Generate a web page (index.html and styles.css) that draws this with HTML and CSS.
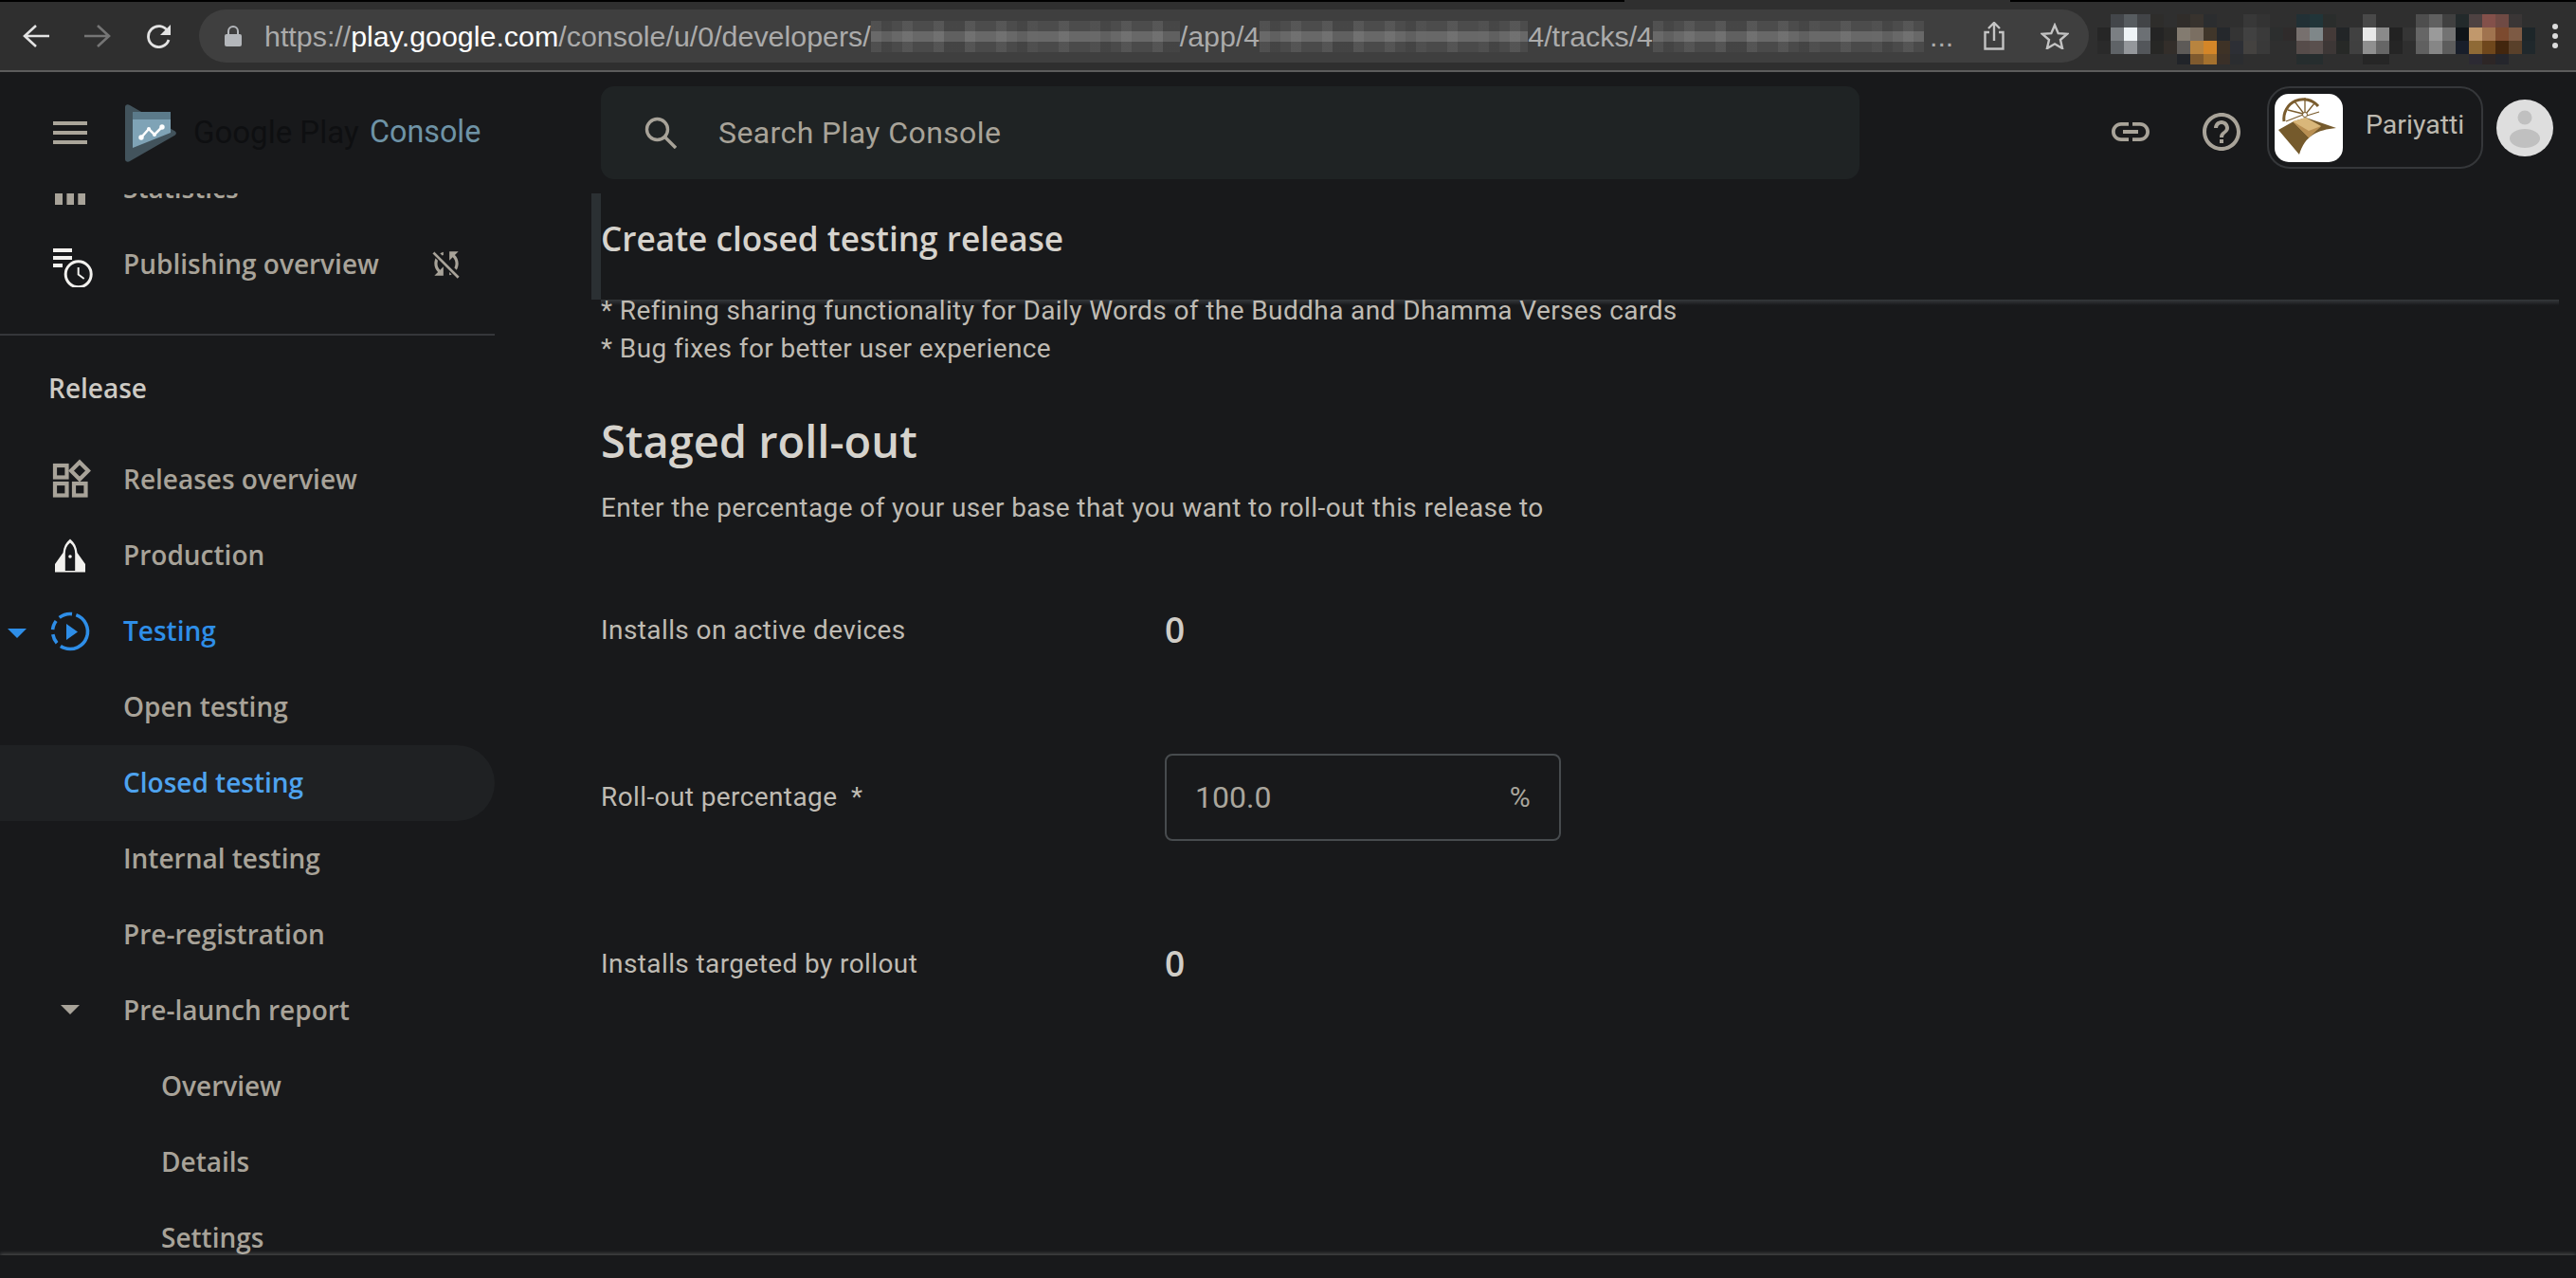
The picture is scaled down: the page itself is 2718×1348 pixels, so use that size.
FILE: index.html
```html
<!DOCTYPE html>
<html>
<head>
	<meta charset="UTF-8">
	<title>Create closed testing release</title>
	<link rel="stylesheet" href="styles.css">
</head>
<body>
<div class="chrome">
	<div class="strip"><i class="strip-left"></i><i class="strip-right"></i></div>
	<div class="toolbar">
		<svg class="nav-icon" viewBox="0 0 28 26"><path d="M14 2L2 13l12 11M2 13h26" fill="none" stroke="#e3e3e3" stroke-width="2.6"/></svg>
		<svg class="nav-icon" viewBox="0 0 28 26"><path d="M14 2l12 11-12 11M26 13H0" fill="none" stroke="#757575" stroke-width="2.6"/></svg>
		<svg class="nav-icon" viewBox="0 0 28 26"><path d="M23 8a11 11 0 1 0 1 9" fill="none" stroke="#e3e3e3" stroke-width="2.8"/><path d="M26 1v11H15z" fill="#e3e3e3"/></svg>
		<div class="pill">
			<svg class="lock" viewBox="0 0 18 22"><path d="M4 10V6a5 5 0 0 1 10 0v4" fill="none" stroke="#b4b7bb" stroke-width="2"/><rect x="0" y="9" width="18" height="13" rx="2" fill="#b4b7bb"/></svg>
			<div class="url">
				<span>https://</span><b>play.google.com</b><span>/console/u/0/developers/</span>
				<i class="blur blur-a"></i><span>/app/4</span>
				<i class="blur blur-b"></i><span>4/tracks/4</span>
				<i class="blur blur-c"></i><span class="dots-text">...</span>
			</div>
			<svg class="share" viewBox="0 0 22 30"><path d="M6 11H1.5v17.5h19V11H16M11 20V2M5 7l6-6 6 6" fill="none" stroke="#c4c4c4" stroke-width="2.4"/></svg>
			<svg class="star" viewBox="0 0 30 28"><path d="M15 2.5l3.7 8.6 9.3.8-7 6.1 2.1 9.1-8.100-4.800-8.100 4.800 2.100-9.100-7-6.100 9.300-.8z" fill="none" stroke="#c4c4c4" stroke-width="2.4"/></svg>
		</div>
		<svg class="ext" viewBox="0 0 467 59" shape-rendering="crispEdges">
			<g transform="translate(0 6)">
			<rect x="14" width="14" height="14" fill="#43464a"/><rect x="28" width="14" height="14" fill="#575c60"/><rect x="42" width="14" height="14" fill="#424447"/><rect x="56" width="14" height="14" fill="#2e2d2b"/><rect x="98" width="14" height="14" fill="#38332e"/><rect x="84" width="14" height="14" fill="#302d2a"/><rect x="112" width="14" height="14" fill="#2b2d2f"/><rect x="154" width="14" height="14" fill="#383838"/><rect x="168" width="14" height="14" fill="#333"/><rect x="210" width="14" height="14" fill="#223035"/><rect x="224" width="14" height="14" fill="#213539"/><rect x="238" width="14" height="14" fill="#2a2d2c"/><rect x="280" width="14" height="14" fill="#494949"/><rect x="336" width="14" height="14" fill="#4e4e4e"/><rect x="350" width="14" height="14" fill="#606060"/><rect x="364" width="14" height="14" fill="#404040"/><rect x="378" width="14" height="14" fill="#232a2b"/><rect x="392" width="14" height="14" fill="#4e4242"/><rect x="406" width="14" height="14" fill="#83504a"/><rect x="420" width="14" height="14" fill="#6f4a44"/><rect x="434" width="14" height="14" fill="#3a3636"/>
			<rect y="14" width="14" height="14" fill="#262626"/><rect x="14" y="14" width="14" height="14" fill="#7b7f83"/><rect x="28" y="14" width="14" height="14" fill="#eef3f6"/><rect x="42" y="14" width="14" height="14" fill="#6c7074"/><rect x="56" y="14" width="14" height="14" fill="#242424"/><rect x="70" y="14" width="14" height="14" fill="#2b2a28"/><rect x="84" y="14" width="14" height="14" fill="#837b70"/><rect x="98" y="14" width="14" height="14" fill="#7b6f62"/><rect x="112" y="14" width="14" height="14" fill="#40362a"/><rect x="126" y="14" width="14" height="14" fill="#25282c"/><rect x="140" y="14" width="14" height="14" fill="#343434"/><rect x="154" y="14" width="14" height="14" fill="#414141"/><rect x="168" y="14" width="14" height="14" fill="#3a3a3a"/><rect x="182" y="14" width="14" height="14" fill="#2c2e2e"/><rect x="196" y="14" width="14" height="14" fill="#2f2b2b"/><rect x="210" y="14" width="14" height="14" fill="#77706e"/><rect x="224" y="14" width="14" height="14" fill="#7f8789"/><rect x="238" y="14" width="14" height="14" fill="#443a38"/><rect x="252" y="14" width="14" height="14" fill="#222527"/><rect x="266" y="14" width="14" height="14" fill="#414141"/><rect x="280" y="14" width="14" height="14" fill="#e8e8e8"/><rect x="294" y="14" width="14" height="14" fill="#8a8a8a"/><rect x="308" y="14" width="14" height="14" fill="#222"/><rect x="322" y="14" width="14" height="14" fill="#353535"/><rect x="336" y="14" width="14" height="14" fill="#666"/><rect x="350" y="14" width="14" height="14" fill="#9a9a9a"/><rect x="364" y="14" width="14" height="14" fill="#737373"/><rect x="378" y="14" width="14" height="14" fill="#0f1418"/><rect x="392" y="14" width="14" height="14" fill="#c1986c"/><rect x="406" y="14" width="14" height="14" fill="#a0734f"/><rect x="420" y="14" width="14" height="14" fill="#7c4a2f"/><rect x="434" y="14" width="14" height="14" fill="#7d5a44"/><rect x="448" y="14" width="14" height="14" fill="#1d2629"/>
			<rect y="28" width="14" height="14" fill="#2a2a2a"/><rect x="14" y="28" width="14" height="14" fill="#5f6367"/><rect x="28" y="28" width="14" height="14" fill="#94979b"/><rect x="42" y="28" width="14" height="14" fill="#53565a"/><rect x="56" y="28" width="14" height="14" fill="#272725"/><rect x="70" y="28" width="14" height="14" fill="#332e2a"/><rect x="84" y="28" width="14" height="14" fill="#5d5a57"/><rect x="98" y="28" width="14" height="14" fill="#b8843f"/><rect x="112" y="28" width="14" height="14" fill="#d48628"/><rect x="126" y="28" width="14" height="14" fill="#3e3226"/><rect x="140" y="28" width="14" height="14" fill="#2d2f35"/><rect x="154" y="28" width="14" height="14" fill="#444240"/><rect x="168" y="28" width="14" height="14" fill="#393939"/><rect x="210" y="28" width="14" height="14" fill="#564c4a"/><rect x="224" y="28" width="14" height="14" fill="#5a504e"/><rect x="238" y="28" width="14" height="14" fill="#3d3736"/><rect x="252" y="28" width="14" height="14" fill="#272927"/><rect x="266" y="28" width="14" height="14" fill="#404040"/><rect x="280" y="28" width="14" height="14" fill="#8f8f8f"/><rect x="294" y="28" width="14" height="14" fill="#666"/><rect x="308" y="28" width="14" height="14" fill="#252525"/><rect x="336" y="28" width="14" height="14" fill="#606060"/><rect x="350" y="28" width="14" height="14" fill="#868686"/><rect x="364" y="28" width="14" height="14" fill="#5c5c5c"/><rect x="378" y="28" width="14" height="14" fill="#181e2a"/><rect x="392" y="28" width="14" height="14" fill="#8f6a36"/><rect x="406" y="28" width="14" height="14" fill="#6f471c"/><rect x="420" y="28" width="14" height="14" fill="#42260e"/><rect x="434" y="28" width="14" height="14" fill="#59402a"/><rect x="448" y="28" width="14" height="14" fill="#20282c"/>
			<rect x="84" y="42" width="14" height="11" fill="#212429"/><rect x="98" y="42" width="14" height="11" fill="#7f5a2e"/><rect x="112" y="42" width="14" height="11" fill="#a4712e"/><rect x="126" y="42" width="14" height="11" fill="#3a3028"/><rect x="140" y="42" width="14" height="11" fill="#2b2d30"/><rect x="210" y="42" width="28" height="11" fill="#262d2e"/><rect x="280" y="42" width="28" height="11" fill="#262626"/><rect x="392" y="42" width="14" height="11" fill="#2c2a33"/><rect x="406" y="42" width="14" height="11" fill="#2d2626"/><rect x="420" y="42" width="14" height="11" fill="#25262c"/>
			</g>
		</svg>
		<div class="menu"><i></i><i></i><i></i></div>
	</div>
</div>

<div class="console">
	<div class="topbar">
		<div class="brand">
			<div class="burger"><i></i><i></i><i></i></div>
			<svg class="play-logo" viewBox="0 0 54 61">
				<path d="M0 3c0-3 3-3.500 5-2l47 27c2.500 1.500 2.500 3.500 0 5L5 60c-2 1.500-5 .5-5-2z" fill="#42535c"/>
				<path d="M8 8h40v22L8 46z" fill="#7fa3b6"/>
				<path d="M8 8h40v8H8z" fill="#5b7a8a"/>
				<path d="M17 35l8-9 6 6 8-8" fill="none" stroke="#fff" stroke-width="2.500"/>
				<circle cx="17" cy="35" r="2.700" fill="#fff"/><circle cx="25" cy="26" r="2" fill="#fff"/><circle cx="31" cy="32" r="2" fill="#fff"/><circle cx="39" cy="24" r="2.700" fill="#fff"/>
			</svg>
			<span class="brand-name">Google Play</span>
			<span class="brand-console">Console</span>
		</div>
		<div class="search">
			<svg class="search-icon" viewBox="0 0 34 34"><circle cx="13.500" cy="13.500" r="11" fill="none" stroke="#a8a399" stroke-width="3.400"/><path d="M21 21l12 12" stroke="#a8a399" stroke-width="3.400"/></svg>
			<span>Search Play Console</span>
		</div>
		<svg class="top-icon" viewBox="0 0 24 24"><path fill="#a8a399" d="M3.900 12c0-1.710 1.390-3.100 3.100-3.100h4V7H7c-2.760 0-5 2.240-5 5s2.240 5 5 5h4v-1.900H7c-1.710 0-3.100-1.390-3.100-3.100zM8 13h8v-2H8v2zm9-6h-4v1.900h4c1.710 0 3.100 1.390 3.100 3.100s-1.390 3.100-3.100 3.100h-4V17h4c2.760 0 5-2.240 5-5s-2.240-5-5-5z"/></svg>
		<svg class="top-icon help" viewBox="0 0 24 24"><path fill="#a8a399" d="M11 18h2v-2h-2v2zm1-16C6.480 2 2 6.480 2 12s4.480 10 10 10 10-4.480 10-10S17.520 2 12 2zm0 18c-4.410 0-8-3.590-8-8s3.590-8 8-8 8 3.590 8 8-3.590 8-8 8zm0-14c-2.210 0-4 1.790-4 4h2c0-1.100.9-2 2-2s2 .9 2 2c0 2-3 1.750-3 5h2c0-2.250 3-2.500 3-5 0-2.210-1.790-4-4-4z"/></svg>
		<div class="account">
			<svg class="app-logo" viewBox="0 0 72 72">
				<rect width="72" height="72" rx="15" fill="#fff"/>
				<path d="M10 29A20.500 20.500 0 0 1 46 13" fill="none" stroke="#7a5c2e" stroke-width="3"/>
				<path d="M31 21L21 8M32 20l0-16M33 21l9-11M34 23l13-4M12 29l18-7M14 17l16 4" stroke="#7a5c2e" stroke-width="1.300"/>
				<circle cx="32" cy="22" r="2.500" fill="#fff" stroke="#7a5c2e"/>
				<path d="M4 38l16-9 13-4 32 11c-20 2-33 8-39 28z" fill="#755a2c"/>
				<path d="M19 29l14-4 16 9-13 12z" fill="#d9b77a"/>
				<path d="M19 29l17 10 13-5-13 12z" fill="#b98f52"/>
			</svg>
			<span>Pariyatti</span>
		</div>
		<svg class="avatar" viewBox="0 0 60 60">
			<circle cx="30" cy="30" r="30" fill="#dedede"/>
			<circle cx="30" cy="19" r="7.500" fill="#c0c0c0"/>
			<ellipse cx="30" cy="41" rx="16" ry="10" fill="#c0c0c0"/>
		</svg>
	</div>

	<div class="panes">
		<nav class="sidebar">
			<ul class="nav-list">
				<li class="nav-row">
					<svg class="nav-glyph" viewBox="0 0 48 48"><path fill="#a8a399" d="M8 15h8v26H8zM20.400 15h7.600v26h-7.600zM32.300 15H40v26h-7.700z"/></svg>
					<span>Statistics</span>
				</li>
				<li class="nav-row">
					<svg class="nav-glyph" viewBox="0 0 48 48"><path fill="#f2f1ee" d="M6 7h20v4H6zM6 15h20v4H6zM6 23h10v4H6z"/><circle cx="32.700" cy="34.300" r="13.500" fill="#18191b" stroke="#f2f1ee" stroke-width="3"/><path d="M32.700 27v7.500l6 4.500" fill="none" stroke="#f2f1ee" stroke-width="2"/></svg>
					<span>Publishing overview</span>
					<svg class="sync-off" viewBox="0 0 24 24"><path fill="#a8a399" d="M10 6.350V4.260c-.8.21-1.550.54-2.230.96l1.460 1.460c.25-.12.5-.24.77-.33zm-7.140-.94l2.360 2.360C4.450 8.990 4 10.440 4 12c0 2.210.91 4.200 2.360 5.640L4 20h6v-6l-2.240 2.240C6.680 15.150 6 13.660 6 12c0-1 .25-1.940.68-2.770l8.080 8.080c-.25.13-.5.25-.77.34v2.090c.8-.21 1.550-.54 2.230-.96l2.360 2.360 1.270-1.270L4.140 4.140 2.860 5.410zM20 4h-6v6l2.240-2.240C17.320 8.850 18 10.340 18 12c0 1-.25 1.940-.68 2.770l1.460 1.460C19.550 15.010 20 13.560 20 12c0-2.210-.91-4.200-2.360-5.640L20 4z"/><path d="M3.500 4.800l16.500 16.500" stroke="#18191b" stroke-width="3.400"/><path d="M3.500 4.800l16.500 16.500" stroke="#a8a399" stroke-width="1.700"/></svg>
				</li>
				<li class="nav-divider"></li>
				<li class="nav-section">Release</li>
				<li class="nav-row">
					<svg class="nav-glyph" viewBox="0 0 48 48"><g fill="none" stroke="#a8a399" stroke-width="4.200"><rect x="8" y="9" width="12.500" height="12.500"/><path d="M34 5.500l9 9-9 9-9-9z"/><rect x="8" y="28" width="12.500" height="12.500"/><rect x="28" y="28" width="12.500" height="12.500"/></g></svg>
					<span>Releases overview</span>
				</li>
				<li class="nav-row">
					<svg class="nav-glyph" viewBox="0 0 48 48"><path fill="#f2f1ee" fill-rule="evenodd" d="M24 6.500c4.500 3.500 7 8.500 7.500 14.500l8.500 12v8.500H8V33l8.500-12c.5-6 3-11 7.500-14.500zm0 4c-3.500 3-5.200 6.500-5.200 11.500v18h10.400V22c0-5-1.700-8.500-5.200-11.500z"/><circle cx="24" cy="25" r="1.800" fill="#f2f1ee"/></svg>
					<span>Production</span>
				</li>
				<li class="nav-row is-open">
					<i class="caret caret-blue"></i>
					<svg class="nav-glyph" viewBox="0 0 48 48"><circle cx="24" cy="24" r="18.500" fill="none" stroke="#2e8ee8" stroke-width="3.600" stroke-dasharray="62 5 10 5 10 5 14 5" transform="rotate(-70 24 24)"/><path d="M20 16v17l12-8.500z" fill="#2e8ee8"/></svg>
					<span>Testing</span>
				</li>
				<li class="nav-row sub">Open testing</li>
				<li class="nav-row sub is-active">Closed testing</li>
				<li class="nav-row sub">Internal testing</li>
				<li class="nav-row sub">Pre-registration</li>
				<li class="nav-row">
					<span class="glyph-box"><i class="caret"></i></span>
					<span>Pre-launch report</span>
				</li>
				<li class="nav-row sub deep">Overview</li>
				<li class="nav-row sub deep">Details</li>
				<li class="nav-row sub deep">Settings</li>
			</ul>
		</nav>

		<main class="content">
			<div class="page-head">
				<h1>Create closed testing release</h1>
			</div>
			<p class="notes">* Refining sharing functionality for Daily Words of the Buddha and Dhamma Verses cards<br>* Bug fixes for better user experience</p>
			<h2>Staged roll-out</h2>
			<p class="lead">Enter the percentage of your user base that you want to roll-out this release to</p>
			<div class="form-grid">
				<label>Installs on active devices</label>
				<div class="stat">0</div>
				<label>Roll-out percentage&nbsp; *</label>
				<div class="field"><input value="100.0"><span>%</span></div>
				<label>Installs targeted by rollout</label>
				<div class="stat">0</div>
			</div>
		</main>
	</div>
	<div class="bottom-edge"></div>
</div>
</body>
</html>
```
FILE: styles.css
```css
html,body,ul,li,p,h1,h2{
	padding:0;
	margin:0;
}
li{
	list-style:none;
}
body{
	width:2718px;
	height:1348px;
	overflow:hidden;
	background:#18191b;
	font-family:Roboto,"Liberation Sans",sans-serif;
}

/* browser frame */
.chrome{
	height:76px;
	background:#2f2f2f;
}
.strip{
	height:2px;
	display:flex;
	justify-content:space-between;
}
.strip-left{
	width:1714px;
	background:#000;
}
.strip-right{
	width:597px;
	background:#000;
}
.toolbar{
	height:72px;
	border-bottom:2px solid #5c5c5c;
	display:flex;
	align-items:center;
	padding-left:24px;
}
.nav-icon{
	width:28px;
	height:26px;
	margin-right:37px;
}
.pill{
	width:1994px;
	height:56px;
	margin-left:-9px;
	border-radius:28px;
	background:#3f3f3f;
	display:flex;
	align-items:center;
	padding-left:27px;
	box-sizing:border-box;
}
.lock{
	width:18px;
	height:22px;
	margin-right:24px;
}
.url{
	width:1814px;
	flex:none;
	display:flex;
	align-items:center;
	white-space:nowrap;
	font:30.4px/56px "Liberation Sans",sans-serif;
	color:#ababab;
}
.url b{
	font-weight:normal;
	color:#fff;
}
.blur{
	height:33px;
	flex:none;
	background:
		repeating-linear-gradient(90deg,rgba(255,255,255,.06) 0 11px,transparent 11px 33px),
		repeating-linear-gradient(90deg,rgba(0,0,0,.08) 0 22px,transparent 22px 77px),
		linear-gradient(#4c4c4c 33%,#686868 33% 66%,#4a4a4a 66%);
}
.blur-a{
	width:326px;
}
.blur-b{
	width:283px;
}
.blur-c{
	width:286px;
}
.dots-text{
	margin-left:6px;
}
.share{
	width:22px;
	height:30px;
	flex:none;
}
.star{
	width:30px;
	height:28px;
	flex:none;
	margin-left:38px;
}
.ext{
	width:467px;
	height:59px;
	margin-left:9px;
}
.menu{
	margin-left:13px;
	display:flex;
	flex-direction:column;
	gap:4px;
}
.menu i{
	width:6px;
	height:6px;
	border-radius:50%;
	background:#dcdcdc;
}

/* console top bar */
.console{
	height:1272px;
	display:flex;
	flex-direction:column;
}
.topbar{
	height:128px;
	flex:none;
	display:flex;
	align-items:flex-start;
}
.brand{
	width:634px;
	height:126px;
	flex:none;
	display:flex;
	align-items:center;
	padding-left:56px;
	box-sizing:border-box;
	font-size:33px;
}
.burger{
	width:36px;
	display:flex;
	flex-direction:column;
	gap:6px;
	margin-top:2px;
}
.burger i{
	height:4px;
	background:#aaa59a;
}
.play-logo{
	width:54px;
	height:61px;
	margin:2px 0 0 40px;
}
.brand-name{
	margin-left:18px;
	width:186px;
	color:#0e0f11;
}
.brand-console{
	font-size:32.300px;
	color:#6e93a6;
}
.search{
	width:1328px;
	height:98px;
	margin-top:15px;
	border-radius:14px;
	background:#1f2324;
	display:flex;
	align-items:center;
	padding-left:46px;
	box-sizing:border-box;
	color:#a8a399;
	font-size:32px;
	letter-spacing:.4px;
}
.search-icon{
	width:34px;
	height:34px;
	margin-right:44px;
}
.top-icon{
	width:48px;
	height:48px;
	margin:39px 0 0 262px;
}
.top-icon.help{
	margin-left:48px;
}
.account{
	width:228px;
	height:87px;
	margin:15px 0 0 24px;
	border:2px solid #35373a;
	border-radius:24px;
	box-sizing:border-box;
	display:flex;
	align-items:center;
	padding-left:6px;
	color:#bdb9b0;
	font-size:28.500px;
}
.app-logo{
	width:72px;
	height:72px;
	margin-right:24px;
}
.account span{
	margin-top:-6px;
}
.avatar{
	width:60px;
	height:60px;
	margin:29px 0 0 14px;
}

/* sidebar + content */
.panes{
	height:1120px;
	flex:none;
	display:flex;
	overflow:hidden;
}
.sidebar{
	width:624px;
	flex:none;
	overflow:hidden;
	font-family:"Open Sans",sans-serif;
	font-weight:600;
	font-size:28px;
	color:#a8a399;
}
.nav-list{
	width:522px;
	margin-top:-45px;
}
.nav-row{
	height:80px;
	display:flex;
	align-items:center;
	padding:0 0 2px 50px;
	gap:32px;
	position:relative;
	box-sizing:border-box;
}
.nav-glyph,.glyph-box{
	width:48px;
	height:48px;
	flex:none;
}
.nav-glyph{
	margin-top:2px;
}
.glyph-box{
	display:flex;
	align-items:center;
	justify-content:center;
}
.sync-off{
	width:38px;
	height:38px;
	margin-left:auto;
	margin-right:32px;
}
.nav-divider{
	height:2px;
	margin-top:33px;
	background:#35373a;
}
.nav-section{
	height:112px;
	line-height:110px;
	padding-left:51px;
	color:#cdcac4;
}
.nav-row.sub{
	padding-left:130px;
}
.nav-row.deep{
	padding-left:170px;
}
.is-open{
	color:#2e8ee8;
}
.is-active{
	color:#4ea3ef;
	background:#1f2123;
	border-radius:0 40px 40px 0;
}
.caret{
	width:0;
	height:0;
	border-left:10px solid transparent;
	border-right:10px solid transparent;
	border-top:10px solid #a8a399;
}
.caret-blue{
	position:absolute;
	left:8px;
	top:37px;
	border-top-color:#2e8ee8;
}
.content{
	flex:1;
	color:#bfbbb3;
	font-size:28px;
	line-height:40px;
	letter-spacing:.4px;
	padding-right:18px;
}
.page-head{
	height:112px;
	border-left:10px solid #2b3033;
	box-sizing:border-box;
	position:relative;
	padding-top:27px;
}
.page-head::after{
	content:"";
	position:absolute;
	left:0;
	right:0;
	top:100%;
	height:6px;
	background:linear-gradient(#36393c,rgba(54,57,60,0));
}
h1{
	font-family:"Open Sans",sans-serif;
	font-size:35.200px;
	font-weight:600;
	letter-spacing:0;
	color:#d6d3cd;
}
.notes{
	margin:-8px 0 0 10px;
	position:relative;
}
h2{
	margin:47px 0 0 10px;
	font-family:"Open Sans",sans-serif;
	font-size:47px;
	font-weight:600;
	line-height:60px;
	letter-spacing:0;
	color:#d6d3cd;
}
.lead{
	margin:21px 0 0 10px;
}
.form-grid{
	margin:89px 0 0 10px;
	display:grid;
	grid-template-columns:595px 418px;
	row-gap:110px;
	align-items:center;
}
.stat{
	font-family:"Open Sans",sans-serif;
	font-weight:600;
	font-size:37px;
	line-height:36px;
	letter-spacing:0;
	color:#d0cdc7;
	margin-bottom:3px;
}
.field{
	height:92px;
	border:2px solid #474b4e;
	border-radius:8px;
	box-sizing:border-box;
	display:flex;
	align-items:center;
	padding:0 30px;
}
.field input{
	flex:1;
	min-width:0;
	border:0;
	padding:0;
	background:none;
	font:32px Roboto,sans-serif;
	color:#aaa69d;
}
.field span{
	font-size:30px;
	color:#aaa69d;
}
.bottom-edge{
	height:24px;
	flex:none;
	background:#18191b;
	box-shadow:0 -2px 4px rgba(255,255,255,.2);
	position:relative;
}
```
